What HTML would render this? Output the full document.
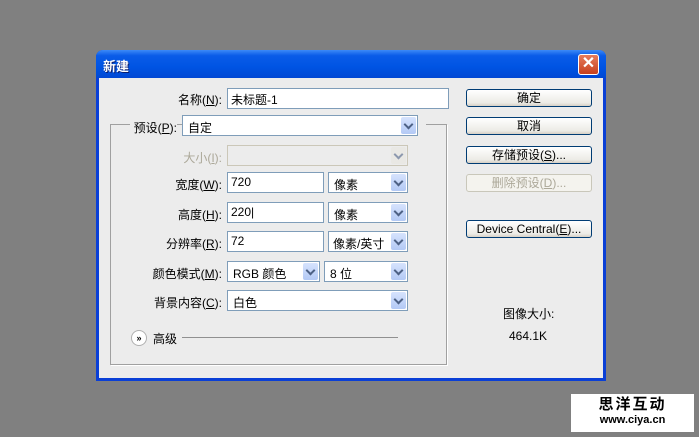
<!DOCTYPE html><html><head><meta charset="utf-8"><style>
*{box-sizing:border-box;margin:0;padding:0}
body{width:699px;height:437px;background:#808080;position:relative;overflow:hidden;font:12px "Liberation Sans","Noto Sans CJK SC",sans-serif;color:#000}
.a{position:absolute}
#dlg{left:96px;top:50px;width:510px;height:331px;background:#0a3fd6;border-radius:7px 7px 0 0}
#tb{left:0;top:0;width:510px;height:28px;border-radius:7px 7px 0 0;background:linear-gradient(#3d8af7,#0a5ce8 20%,#0054e3 60%,#0148d4);color:#fff;font-weight:bold;font-size:13px;padding:6px 0 0 7px;text-shadow:1px 1px #0a1f70}
#body{left:3px;top:28px;width:504px;height:300px;background:#ececec}
.in{position:absolute;background:#fff;border:1px solid #7f9db9;height:21px;padding:2px 0 0 3px}
.sel{position:absolute;background:#fff;border:1px solid #7f9db9;height:21px;padding:3px 0 0 5px}
.sel i{position:absolute;right:1px;top:1px;width:15px;height:17px;background:linear-gradient(#d6e3fd,#b3c9f5);border-radius:2px}
.sel i:after{content:"";position:absolute;left:4px;top:4px;width:5px;height:5px;border-right:2px solid #4d6185;border-bottom:2px solid #4d6185;transform:rotate(45deg)}
.lb{position:absolute;right:477px;text-align:right;white-space:nowrap}
.btn{position:absolute;left:466px;width:126px;height:18px;border:1px solid #003c74;border-radius:3px;background:linear-gradient(#fff,#ecebe6 80%,#d6d0c5);text-align:center;line-height:16px}
u{text-decoration:underline}
</style></head><body>
<div id="dlg" class="a"><div id="tb" class="a">新建</div>
<div class="a" style="left:482px;top:4px;width:21px;height:21px;border:1px solid #fff;border-radius:3px;background:linear-gradient(#e67c5c,#c8401e);color:#fff;font-weight:bold;font-size:16px;text-align:center;line-height:18px">✕</div>
<div id="body" class="a"></div></div>
<div class="a" style="left:110px;top:124px;width:337px;height:241px;border:1px solid #a0a0a0;box-shadow:1px 1px #fff"></div>
<div class="lb" style="top:91px">名称(<u>N</u>):</div>
<div class="in" style="left:227px;top:88px;width:222px">未标题-1</div>
<div class="lb" style="top:119px;right:522px;background:#ececec;padding-left:4px">预设(<u>P</u>):</div>
<div class="sel" style="left:182px;top:115px;width:236px">自定<i></i></div>
<div class="a" style="left:418px;top:120px;width:8px;height:8px;background:#ececec"></div>
<div class="lb" style="top:149px;color:#aca899">大小(<u>I</u>):</div>
<div class="sel" style="left:227px;top:145px;width:181px;background:#ececec;border-color:#cbc7b8"><i style="background:#e8e6df;opacity:.6"></i></div>
<div class="lb" style="top:176px">宽度(<u>W</u>):</div>
<div class="in" style="left:227px;top:172px;width:97px">720</div>
<div class="sel" style="left:328px;top:172px;width:80px">像素<i></i></div>
<div class="lb" style="top:206px">高度(<u>H</u>):</div>
<div class="in" style="left:227px;top:202px;width:97px">220|</div>
<div class="sel" style="left:328px;top:202px;width:80px">像素<i></i></div>
<div class="lb" style="top:235px">分辨率(<u>R</u>):</div>
<div class="in" style="left:227px;top:231px;width:97px">72</div>
<div class="sel" style="left:328px;top:231px;width:80px;padding-left:4px">像素/英寸<i></i></div>
<div class="lb" style="top:265px">颜色模式(<u>M</u>):</div>
<div class="sel" style="left:227px;top:261px;width:93px">RGB 颜色<i></i></div>
<div class="sel" style="left:324px;top:261px;width:84px">8 位<i></i></div>
<div class="lb" style="top:294px">背景内容(<u>C</u>):</div>
<div class="sel" style="left:227px;top:290px;width:181px">白色<i></i></div>
<div class="a" style="left:131px;top:330px;width:16px;height:16px;border-radius:50%;border:1px solid #b0b0b0;background:#fff;font-size:9px;text-align:center;line-height:14px;font-weight:bold">»</div>
<div class="a" style="left:153px;top:330px">高级</div>
<div class="a" style="left:182px;top:337px;width:216px;height:1px;background:#909090"></div>
<div class="btn" style="top:89px">确定</div>
<div class="btn" style="top:117px">取消</div>
<div class="btn" style="top:146px">存储预设(<u>S</u>)...</div>
<div class="btn" style="top:174px;color:#aca899;border-color:#c9c7ba;background:#f4f3ee">删除预设(<u>D</u>)...</div>
<div class="btn" style="top:220px">Device Central(<u>E</u>)...</div>
<div class="a" style="left:503px;top:305px">图像大小:</div>
<div class="a" style="left:509px;top:329px">464.1K</div>
<div class="a" style="left:571px;top:394px;width:123px;height:38px;background:#fff;text-align:center">
<div style="font-size:15px;font-weight:bold;line-height:18px;margin-top:2px;letter-spacing:2px">思洋互动</div>
<div style="font-size:11px;font-weight:bold;line-height:13px">www.ciya.cn</div></div>
</body></html>
